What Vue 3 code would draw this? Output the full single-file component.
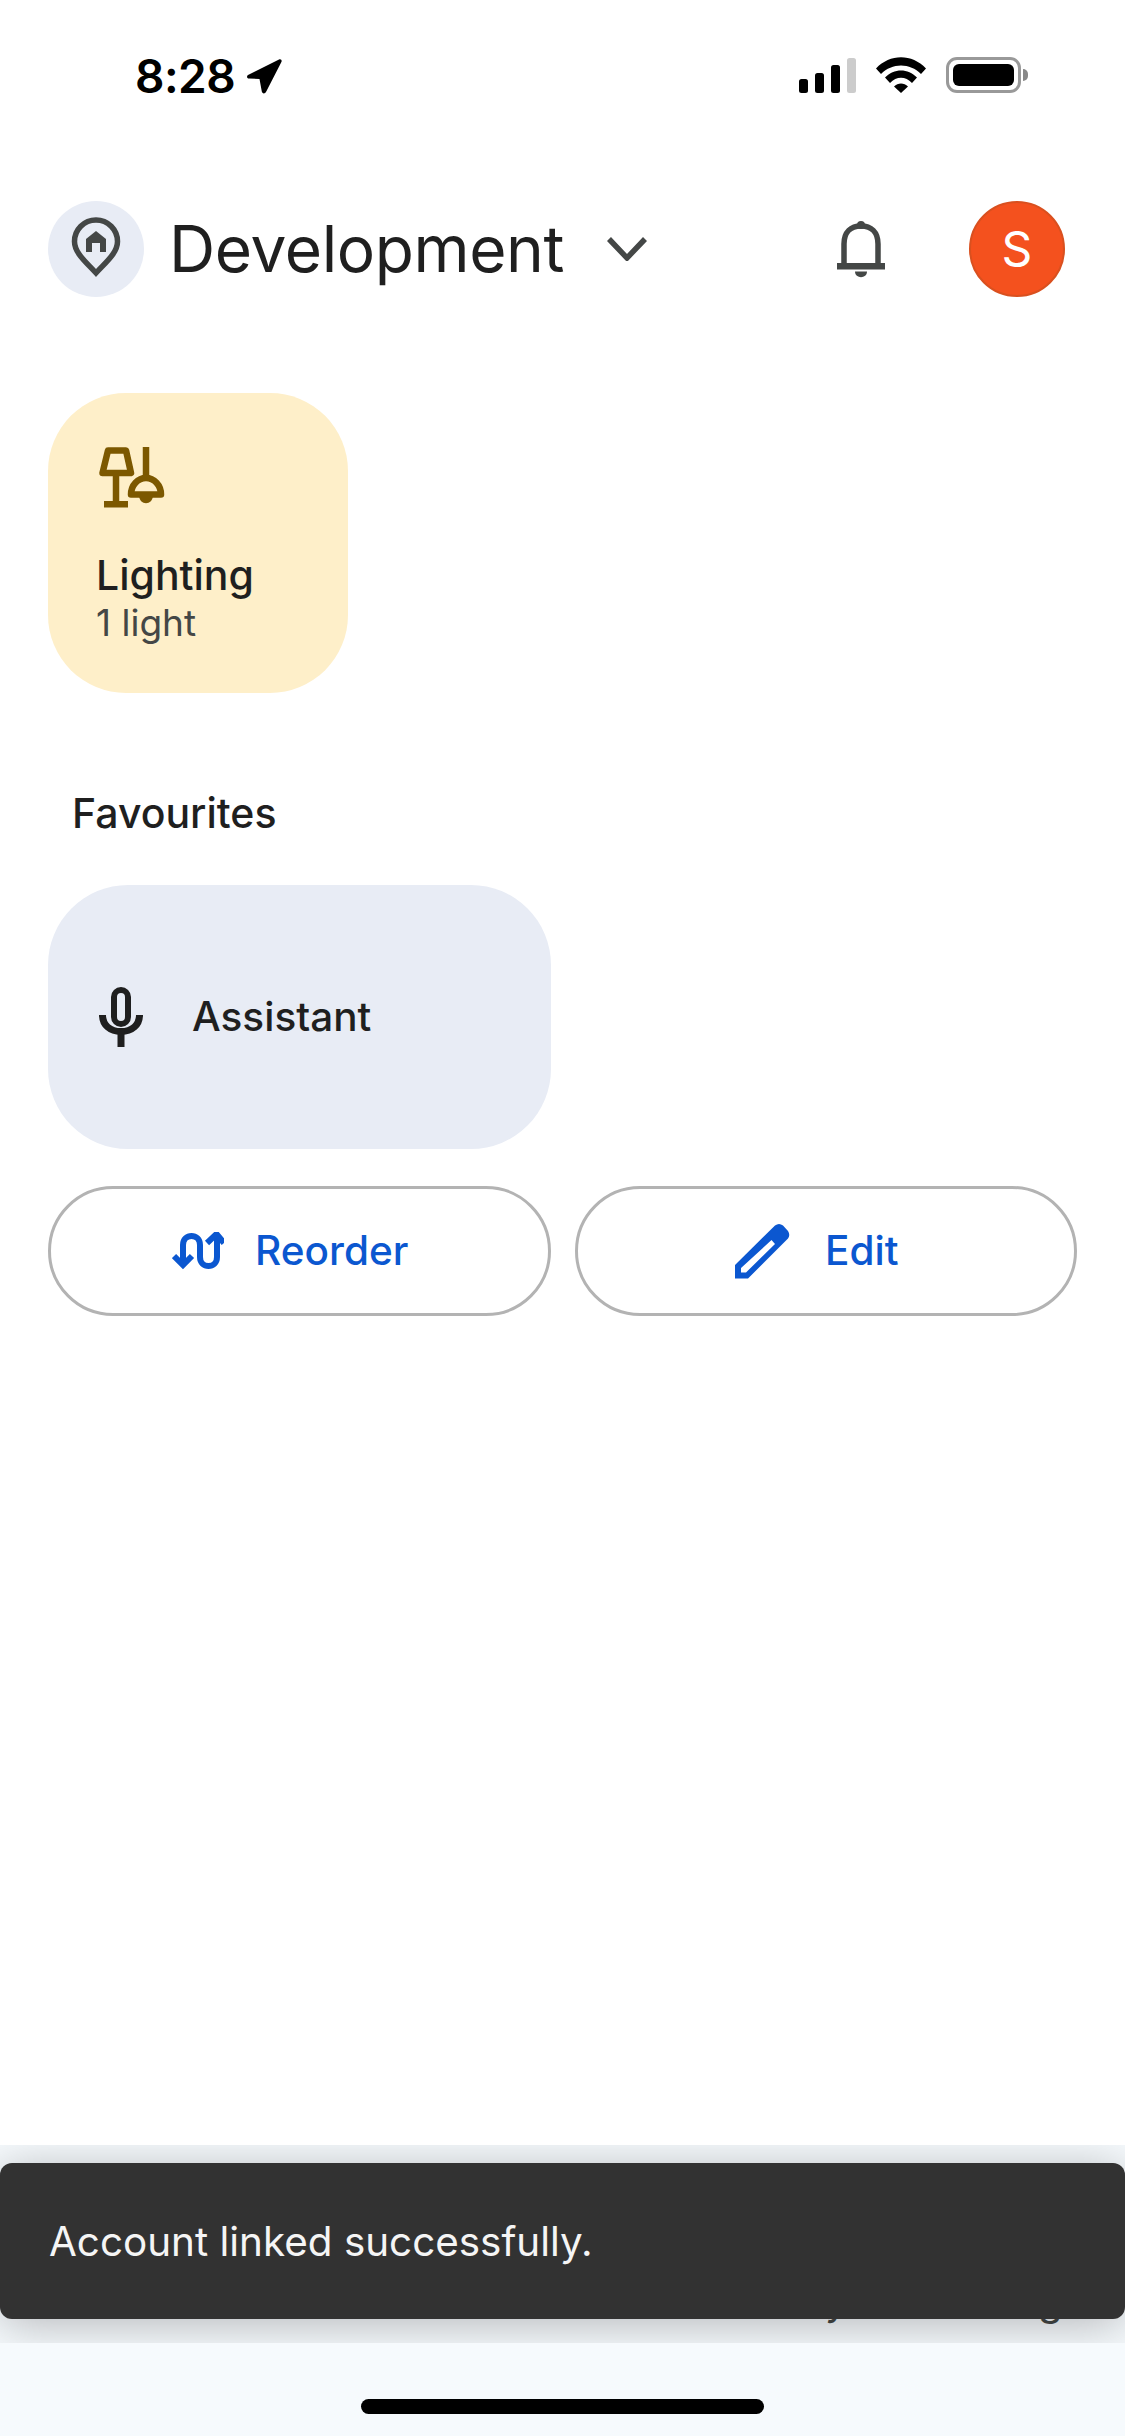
<template>
  <div class="page">
    <div class="status">
      <div class="time-group">
        <span class="time">8:28</span>
        <svg class="arrow" width="37" height="37" viewBox="0 0 37 37"><path d="M2 17 33 1.5c2-.8 3.2.8 2.4 2.6L20 34c-1 2-3.8 1.8-4.2-.4L13.500 21 3 20.500C.8 20.300.4 18 2 17Z" fill="#000"/></svg>
      </div>
      <div class="status-icons">
        <div class="signal">
          <i class="b1"></i><i class="b2"></i><i class="b3"></i><i class="b4"></i>
        </div>
        <svg class="wifi" width="50" height="36" viewBox="0 0 50 36">
          <path d="M0 11.500C14-3.500 36-3.500 50 11.500L45 17C34 5.500 16 5.500 5 17Z" fill="#000"/>
          <path d="M9 20.500C18 11 32 11 41 20.500L36 26C29.500 19 20.500 19 14 26Z" fill="#000"/>
          <path d="M18 29.500C22 25.500 28 25.500 32 29.500L25 36Z" fill="#000"/>
        </svg>
        <div class="battery"><div class="cell"></div><div class="tip"></div></div>
      </div>
    </div>

    <header class="header">
      <div class="place">
        <svg width="96" height="96" viewBox="0 0 96 96">
          <path d="M48 72C38 61 26.500 52 26.500 40.500a21.500 21.500 0 0 1 43 0C69.500 52 58 61 48 72Z" fill="none" stroke="#444746" stroke-width="5.500" stroke-linejoin="miter"/>
          <path d="M48 30 58 38V51H52V42H44V51H38V38Z" fill="#444746"/>
        </svg>
      </div>
      <h1 class="title">Development</h1>
      <svg class="chevron" width="40" height="24" viewBox="0 0 40 24"><path d="M2 2 20 21 38 2" fill="none" stroke="#444746" stroke-width="5.500"/></svg>
      <svg class="bell" width="50" height="58" viewBox="0 0 50 58">
        <path d="M8 45V24C8 12 15 6 25 6s17 6 17 18V45" fill="none" stroke="#444746" stroke-width="5.500"/>
        <rect x="1" y="43" width="48" height="6.500" fill="#444746"/>
        <circle cx="25" cy="5" r="4" fill="#444746"/>
        <path d="M19 51.500H31C31 59 19 59 19 51.500Z" fill="#444746"/>
      </svg>
      <div class="avatar">S</div>
    </header>

    <section class="tile-lighting">
      <svg class="lamp" width="68" height="62" viewBox="0 0 68 62">
        <path d="M9 3.500H27L32 26H3.500Z" fill="none" stroke="#7C5800" stroke-width="6.500" stroke-linejoin="round"/>
        <path d="M17 26V54" stroke="#7C5800" stroke-width="6.500"/>
        <rect x="5" y="54" width="24" height="6.500" fill="#7C5800"/>
        <path d="M47 0V31" stroke="#7C5800" stroke-width="6.500"/>
        <path d="M32 47.500C32 38 39 31 47 31s15 7 15 16.500Z" fill="none" stroke="#7C5800" stroke-width="6.500" stroke-linejoin="round"/>
        <path d="M40 48H54C54 59 40 59 40 48Z" fill="#7C5800"/>
      </svg>
      <div class="tile-name">Lighting</div>
      <div class="tile-sub">1 light</div>
    </section>

    <h2 class="section-title">Favourites</h2>

    <section class="tile-assistant">
      <svg class="mic" width="44" height="60" viewBox="0 0 44 60">
        <rect x="15" y="3" width="14" height="34" rx="7" fill="none" stroke="#1F1F1F" stroke-width="6"/>
        <path d="M3.500 28C3.500 38 11 44.500 22 44.500S40.500 38 40.500 28" fill="none" stroke="#1F1F1F" stroke-width="7"/>
        <path d="M22 44V60" stroke="#1F1F1F" stroke-width="7"/>
      </svg>
      <span class="assistant-name">Assistant</span>
    </section>

    <div class="actions">
      <button class="action">
        <svg width="52" height="38" viewBox="0 0 52 38">
          <path d="M11 33V13C11 1 28 1 28 13V25C28 37 45 37 45 25V4" fill="none" stroke="#0B57D0" stroke-width="6"/>
          <path d="M2 24 11 33 20 24M35 11 44.500 2 52 11" fill="none" stroke="#0B57D0" stroke-width="6"/>
        </svg>
        <span class="action-label">Reorder</span>
      </button>
      <button class="action">
        <svg width="55" height="56" viewBox="0 0 55 56">
          <path fill-rule="evenodd" fill="#0B57D0" d="M0 55.500V42L40 2.500Q44-.5 48 2.500L53 8Q55.500 12 53 15.500L13 55.500ZM6 49.500H11L40 21 36.500 17 6 45Z"/>
        </svg>
        <span class="action-label edit-label">Edit</span>
      </button>
    </div>

    <div class="spacer"></div>

    <footer class="bottom">
      <div class="home"></div>
    </footer>

    <div class="toast-band">
      <div class="hidden-line"><span>y</span><span>g</span></div>
      <div class="toast">Account linked successfully.</div>
    </div>
  </div>
</template>

<script setup>
</script>

<style scoped>
.page {
  position: relative;
  width: 1125px;
  height: 2436px;
  overflow: hidden;
  display: flex;
  flex-direction: column;
  background: #fff;
  font-family: "Inter", "Liberation Sans", sans-serif;
}
.status {
  height: 201px;
  padding: 57px 104px 0 135px;
  box-sizing: border-box;
  display: flex;
  justify-content: space-between;
  align-items: flex-start;
  flex: none;
}
.time-group {
  display: flex;
  align-items: center;
  gap: 11px;
  height: 38px;
}
.time {
  font-family: "Inter", sans-serif;
  font-size: 46px;
  font-weight: 600;
  line-height: 38px;
  letter-spacing: -0.5px;
  color: #000;
}
.status-icons {
  display: flex;
  align-items: flex-start;
  gap: 20px;
}
.signal {
  display: flex;
  align-items: flex-end;
  gap: 7px;
  height: 36px;
  width: 57px;
}
.signal i {
  display: block;
  width: 9px;
  border-radius: 2.500px;
  background: #000;
}
.signal .b1 { height: 14px; }
.signal .b2 { height: 20px; }
.signal .b3 { height: 28px; }
.signal .b4 { height: 35px; background: #ccc; }
.battery {
  position: relative;
  width: 75px;
  height: 36px;
  box-sizing: border-box;
  border: 3px solid #999;
  border-radius: 11px;
  padding: 4px;
}
.cell {
  width: 100%;
  height: 100%;
  background: #000;
  border-radius: 6px;
}
.tip {
  position: absolute;
  right: -10px;
  top: 9px;
  width: 5px;
  height: 12px;
  background: #888;
  border-radius: 0 6px 6px 0;
}
.header {
  display: flex;
  align-items: center;
  height: 96px;
  padding: 0 60px 0 48px;
  flex: none;
}
.place {
  width: 96px;
  height: 96px;
  border-radius: 50%;
  background: #E8ECF5;
}
.title {
  margin: 0 0 0 25px;
  font-size: 64px;
  font-weight: 400;
  line-height: 96px;
  letter-spacing: -0.4px;
  color: #1F1F1F;
}
.chevron {
  margin-left: 43px;
}
.bell {
  margin-left: auto;
  margin-right: 83px;
}
.avatar {
  width: 96px;
  height: 96px;
  border-radius: 50%;
  box-sizing: border-box;
  border: 2px solid #D9501F;
  background: #F4511E;
  color: #fff;
  font-size: 48px;
  line-height: 92px;
  text-align: center;
}
.tile-lighting {
  margin: 96px 0 0 48px;
  width: 300px;
  height: 300px;
  box-sizing: border-box;
  padding: 54px 0 0 48px;
  border-radius: 78px;
  background: #FEEFC9;
  flex: none;
}
.lamp {
  display: block;
  margin: 0 0 0 3px;
}
.tile-name {
  margin-top: 41px;
  font-size: 41px;
  font-weight: 500;
  line-height: 50px;
  color: #1F1F1F;
}
.tile-sub {
  font-size: 37px;
  line-height: 46px;
  color: #444746;
}
.section-title {
  margin: 95px 0 0 72px;
  font-size: 41px;
  font-weight: 500;
  line-height: 50px;
  color: #1F1F1F;
  flex: none;
}
.tile-assistant {
  margin: 47px 0 0 48px;
  width: 503px;
  height: 264px;
  border-radius: 80px;
  background: #E8ECF5;
  display: flex;
  align-items: center;
  padding-left: 51px;
  box-sizing: border-box;
  flex: none;
}
.assistant-name {
  margin-left: 49px;
  font-size: 40.500px;
  font-weight: 500;
  line-height: 50px;
  color: #1F1F1F;
}
.actions {
  display: flex;
  gap: 24px;
  margin: 37px 48px 0;
  flex: none;
}
.action {
  flex: 1;
  height: 130px;
  box-sizing: border-box;
  border: 3px solid #B3B3B3;
  border-radius: 65px;
  background: #fff;
  display: flex;
  align-items: center;
  justify-content: center;
  gap: 31px;
  padding: 0 18px 0 0;
  font-family: inherit;
}
.action-label {
  font-size: 40.500px;
  font-weight: 500;
  line-height: 50px;
  color: #0B57D0;
}
.edit-label {
  margin-left: 4px;
}
.spacer {
  flex: 1;
}
.bottom {
  height: 291px;
  box-sizing: border-box;
  padding: 254px 0 0;
  background: #F6FAFD;
  flex: none;
  display: flex;
  justify-content: center;
}
.home {
  width: 403px;
  height: 15px;
  border-radius: 8px;
  background: #000;
}
.toast-band {
  position: absolute;
  left: 0;
  top: 2145px;
  width: 1125px;
  height: 198px;
  overflow: hidden;
}
.hidden-line {
  position: absolute;
  top: 131px;
  left: 0;
  font-size: 40px;
  line-height: 50px;
  color: #444746;
}
.hidden-line span {
  position: absolute;
  top: 0;
}
.hidden-line span:first-child { left: 825px; }
.hidden-line span:last-child { left: 1038px; }
.toast {
  position: absolute;
  top: 18px;
  left: 0;
  width: 1125px;
  height: 156px;
  box-sizing: border-box;
  padding-left: 49px;
  border-radius: 12px;
  background: #323232;
  box-shadow: 0 6px 48px rgba(0, 0, 0, 0.27);
  color: #F5F5F5;
  font-family: "Inter", sans-serif;
  font-size: 40.400px;
  line-height: 158px;
}
</style>

<style>
body { margin: 0; background: #fff; }
</style>
